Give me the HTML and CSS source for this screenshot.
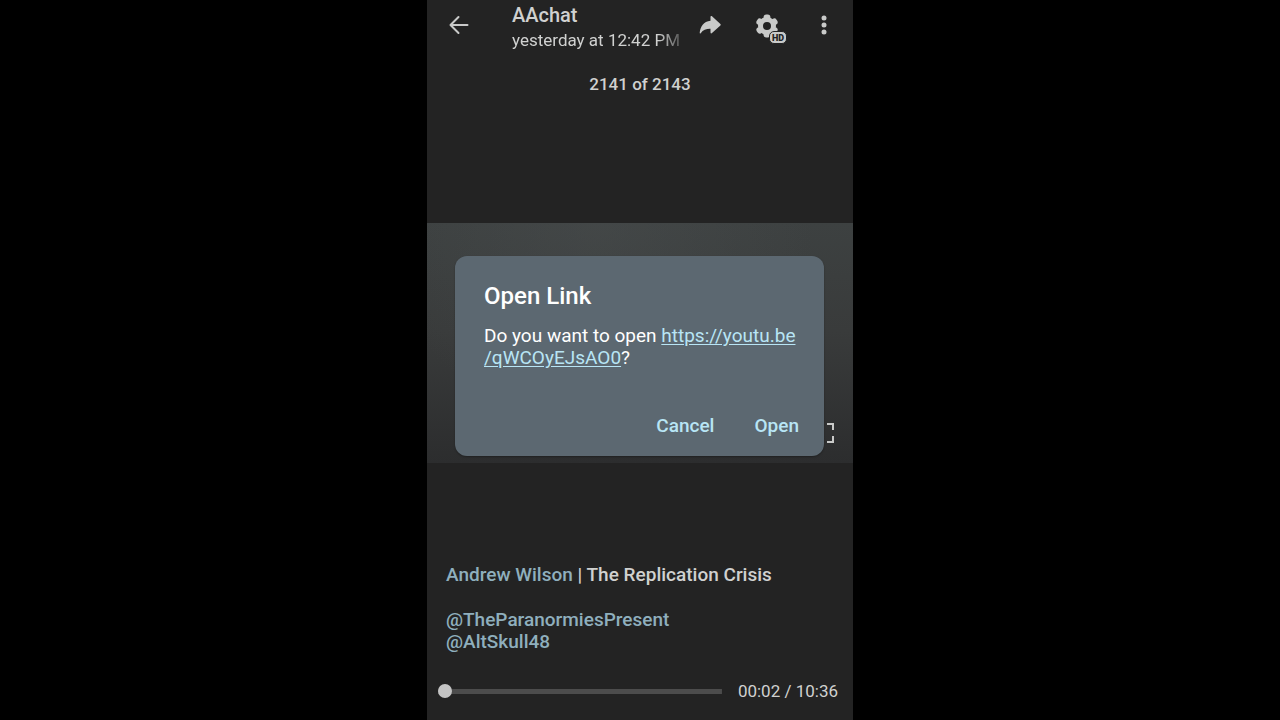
FILE: index.html
```html
<!DOCTYPE html>
<html lang="en">
<head>
<meta charset="utf-8">
<meta name="viewport" content="width=device-width, initial-scale=1">
<title>AAchat</title>
<link rel="stylesheet" href="styles.css">
</head>
<body>
<main class="viewer">
  <header class="topbar">
    <button class="icon-btn back" type="button" aria-label="Back">
      <svg width="20" height="20" viewBox="0 0 20 20" fill="none" stroke="currentColor" stroke-width="2" stroke-linecap="round" stroke-linejoin="round"><path d="M18.500 10H1.500M9.500 2L1.500 10l8 8"/></svg>
    </button>
    <div class="heading">
      <h1 class="chat-name">AAchat</h1>
      <p class="sent-at">yesterday at 12:42 PM</p>
    </div>
    <button class="icon-btn share" type="button" aria-label="Share">
      <svg width="22" height="20" viewBox="0 0 22 20" fill="currentColor"><path d="M11.500 1.800c0-.9.8-1.200 1.500-.6l8.400 7.700c.5.500.5 1 0 1.500l-8.400 7.700c-.7.600-1.500.3-1.500-.6v-3.700C7.300 13.700 4.200 14.800 1.700 18.200c-.5.600-1.100.4-1-.4C1.300 11.500 4.500 6.400 11.500 5.700z"/></svg>
    </button>
    <button class="icon-btn quality" type="button" aria-label="Quality settings, HD">
      <svg width="32" height="32" viewBox="0 0 32 32"><g fill="none" stroke="currentColor"><circle cx="12" cy="14" r="6.500" stroke-width="5"/><path stroke-width="5.400" stroke-linecap="round" d="M11.300 5.300h1.400M11.300 22.700h1.400M19.200 9l.7 1.200M4.100 17.800l.7 1.200M19.900 17.800l-.7 1.200M4.800 9l-.7 1.200"/></g><rect class="badge-box" x="14.500" y="19.500" width="17" height="12" rx="4.500"/><text class="badge-text" x="23" y="29" text-anchor="middle">HD</text></svg>
    </button>
    <button class="icon-btn more" type="button" aria-label="More options">
      <svg width="6" height="20" viewBox="0 0 6 20" fill="currentColor"><circle cx="3" cy="3" r="2.500"/><circle cx="3" cy="10" r="2.500"/><circle cx="3" cy="17" r="2.500"/></svg>
    </button>
  </header>
  <p class="counter">2141 of 2143</p>

  <section class="video" aria-label="Video">
    <button class="fullscreen" type="button" aria-label="Full screen">
      <svg width="20" height="20" viewBox="0 0 20 20" fill="none" stroke="currentColor" stroke-width="2"><path d="M1 7V1h6M13 1h6v6M19 13v6h-6M7 19H1v-6"/></svg>
    </button>
    <div class="dialog" role="dialog" aria-labelledby="dialog-title">
      <h2 class="dialog-title" id="dialog-title">Open Link</h2>
      <p class="dialog-text">Do you want to open <a href="https://youtu.be/qWCOyEJsAO0">https://youtu.be<wbr>/qWCOyEJsAO0</a>?</p>
      <div class="dialog-actions">
        <button class="text-btn" type="button">Cancel</button>
        <button class="text-btn" type="button">Open</button>
      </div>
    </div>
  </section>

  <footer class="bottom">
    <div class="caption">
      <p><a href="#">Andrew Wilson</a> | The Replication Crisis</p>
      <p class="mentions"><a href="#">@TheParanormiesPresent</a><br><a href="#">@AltSkull48</a></p>
    </div>
    <div class="player">
      <input class="seek" type="range" min="0" max="636" value="0" aria-label="Seek">
      <span class="time">00:02 / 10:36</span>
    </div>
  </footer>
</main>
</body>
</html>
```
FILE: styles.css
```css
* {
  box-sizing: border-box;
}

body {
  margin: 0;
  background: #000;
  font-family: Roboto, "Liberation Sans", sans-serif;
  color: #d0d1d0;
}

h1, h2, p {
  margin: 0;
}

button {
  padding: 0;
  border: 0;
  background: none;
  color: inherit;
  font: inherit;
  cursor: pointer;
}

svg {
  display: block;
}

.viewer {
  display: flex;
  flex-direction: column;
  max-width: 426px;
  min-height: 100vh;
  margin: 0 auto;
  background: #232323;
}

.topbar {
  display: flex;
  align-items: flex-start;
  padding: 2px 26px 0 22px;
}

.icon-btn {
  flex: none;
  margin-top: 13px;
  color: #c9cac9;
}

.heading {
  flex: 1;
  min-width: 0;
  margin-left: 43px;
}

.chat-name {
  font-size: 20px;
  line-height: 26px;
  font-weight: 500;
}

.sent-at {
  font-size: 17px;
  line-height: 24px;
  white-space: nowrap;
  mask-image: linear-gradient(to right, #000 146px, rgba(0, 0, 0, 0.3) 168px);
}

.share {
  margin-left: 19px;
}

.quality {
  margin-top: 10px;
  margin-left: 34px;
}

.badge-box {
  fill: #c9cac9;
  stroke: #232323;
  stroke-width: 1;
}

.badge-text {
  fill: #232323;
  font-size: 9px;
  font-weight: 900;
}

.more {
  margin-left: 34px;
}

.counter {
  margin-top: 20px;
  font-size: 17px;
  line-height: 24px;
  font-weight: 500;
  text-align: center;
}

.video {
  position: relative;
  aspect-ratio: 16 / 9;
  margin-top: 127px;
  background:
    radial-gradient(ellipse at 40% 0, rgba(76, 80, 81, 0.4), transparent 60%),
    linear-gradient(#3d4141, #393b3b 45%, #2c2d2e);
}

.fullscreen {
  position: absolute;
  right: 19px;
  bottom: 20px;
  color: #c9cac9;
}

.dialog {
  position: absolute;
  top: 33px;
  left: 28px;
  right: 29px;
  padding: 25px 25px 18px 29px;
  border-radius: 12px;
  background: #5c6871;
  box-shadow: 0 1px 2px rgba(0, 0, 0, 0.3);
  color: #fff;
}

.dialog-title {
  font-size: 24px;
  line-height: 30px;
  font-weight: 500;
}

.dialog-text {
  margin-top: 14px;
  font-size: 19px;
  line-height: 22px;
}

.dialog-text a {
  color: #b8e5f5;
  text-underline-offset: 2px;
}

.dialog-actions {
  display: flex;
  justify-content: flex-end;
  gap: 40px;
  margin-top: 45px;
}

.text-btn {
  color: #b8e5f5;
  font-size: 19px;
  line-height: 24px;
  font-weight: 500;
}

.bottom {
  margin-top: auto;
  padding: 0 15px 17px 11px;
}

.caption {
  padding-left: 8px;
  font-size: 19px;
  line-height: 22px;
  font-weight: 500;
}

.caption a {
  color: #8fafbd;
  text-decoration: none;
}

.mentions {
  margin-top: 23px;
}

.player {
  display: flex;
  align-items: center;
  gap: 16px;
  margin-top: 26px;
}

.seek {
  flex: 1;
  min-width: 0;
  height: 14px;
  margin: 0;
  appearance: none;
  background: linear-gradient(#4c4c4c, #4c4c4c) center / 100% 5px no-repeat;
}

.seek::-webkit-slider-thumb {
  appearance: none;
  width: 14px;
  height: 14px;
  border-radius: 50%;
  background: #c4c4c4;
}

.time {
  font-size: 17px;
  line-height: 24px;
}
```
